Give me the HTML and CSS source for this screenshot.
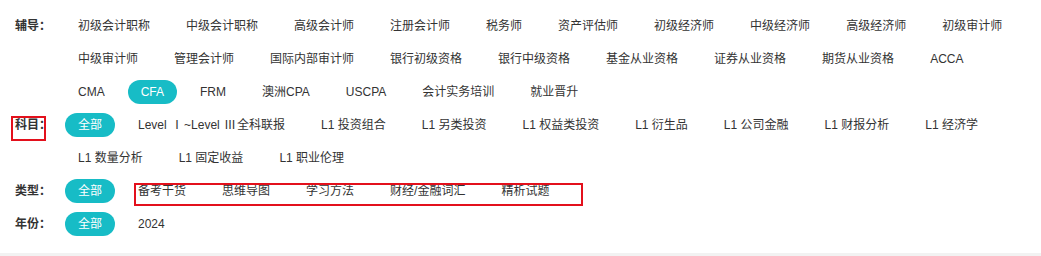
FILE: index.html
```html
<!DOCTYPE html>
<html lang="zh-CN">
<head>
  <meta charset="UTF-8">
  <title>筛选</title>
  <link rel="stylesheet" href="styles.css">
</head>
<body>
  <div class="filter">
    <div class="filter-row">
      <span class="filter-label">辅导：</span>
      <ul class="filter-items">
        <li>初级会计职称</li>
        <li>中级会计职称</li>
        <li>高级会计师</li>
        <li>注册会计师</li>
        <li>税务师</li>
        <li>资产评估师</li>
        <li>初级经济师</li>
        <li>中级经济师</li>
        <li>高级经济师</li>
        <li>初级审计师</li>
        <li>中级审计师</li>
        <li>管理会计师</li>
        <li>国际内部审计师</li>
        <li>银行初级资格</li>
        <li>银行中级资格</li>
        <li>基金从业资格</li>
        <li>证券从业资格</li>
        <li>期货从业资格</li>
        <li>ACCA</li>
        <li>CMA</li>
        <li class="active">CFA</li>
        <li>FRM</li>
        <li>澳洲CPA</li>
        <li>USCPA</li>
        <li>会计实务培训</li>
        <li>就业晋升</li>
      </ul>
    </div>

    <div class="filter-row">
      <span class="filter-label">科目：</span>
      <span class="mark mark-subject"></span>
      <ul class="filter-items">
        <li class="active">全部</li>
        <li>Level <span class="roman">Ⅰ</span>~Level <span class="roman">Ⅲ</span>全科联报</li>
        <li>L1 投资组合</li>
        <li>L1 另类投资</li>
        <li>L1 权益类投资</li>
        <li>L1 衍生品</li>
        <li>L1 公司金融</li>
        <li>L1 财报分析</li>
        <li>L1 经济学</li>
        <li>L1 数量分析</li>
        <li>L1 固定收益</li>
        <li>L1 职业伦理</li>
      </ul>
    </div>

    <div class="filter-row">
      <span class="filter-label">类型：</span>
      <span class="mark mark-type"></span>
      <ul class="filter-items">
        <li class="active">全部</li>
        <li>备考干货</li>
        <li>思维导图</li>
        <li>学习方法</li>
        <li>财经/金融词汇</li>
        <li>精析试题</li>
      </ul>
    </div>

    <div class="filter-row">
      <span class="filter-label">年份：</span>
      <ul class="filter-items">
        <li class="active">全部</li>
        <li>2024</li>
      </ul>
    </div>
  </div>
</body>
</html>
```

FILE: styles.css
```css
body {
  font-family: "Liberation Sans", "Noto Sans CJK SC", sans-serif;
  font-size: 12px;
  color: #333;
  margin: 0;
  padding: 0;
  background-color: #f2f2f2;
}

.filter {
  background-color: #fff;
  padding: 14px 20px 0 0;
  height: 253px;
  box-sizing: border-box;
}

.filter-row {
  position: relative;
  display: flex;
  align-items: flex-start;
  margin-bottom: 9px;
}

.filter-row:last-child {
  margin-bottom: 0;
}

.filter-label {
  flex: 0 0 50px;
  padding-left: 15px;
  line-height: 24px;
  font-weight: bold;
  color: #333;
}

.filter-items {
  flex: 1;
  display: flex;
  flex-wrap: wrap;
  column-gap: 10px;
  row-gap: 9px;
  margin: 0;
  padding: 0;
  list-style: none;
}

.filter-items li {
  height: 24px;
  line-height: 24px;
  padding: 0 13px;
  border-radius: 12px;
  white-space: nowrap;
  cursor: pointer;
}

.filter-items li.active {
  background-color: #17bcc6;
  color: #fff;
}

.roman {
  display: inline-block;
  width: 14px;
  text-align: center;
}

/* annotation boxes */
.mark {
  position: absolute;
  border: 2px solid #e3101c;
  box-sizing: border-box;
  pointer-events: none;
}

.mark-subject {
  left: 11px;
  top: 3px;
  width: 35px;
  height: 25px;
}

.mark-type {
  left: 134px;
  top: 4px;
  width: 449px;
  height: 23px;
}
```
